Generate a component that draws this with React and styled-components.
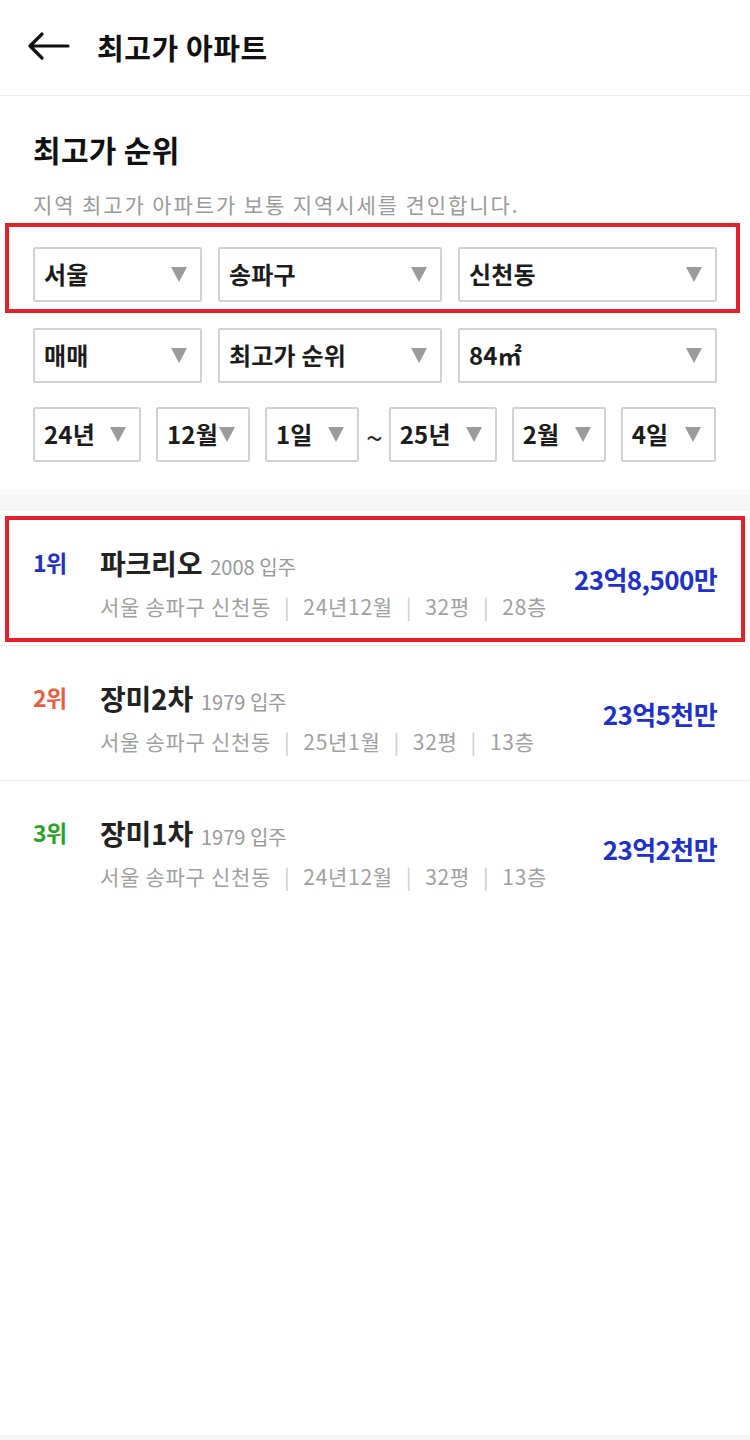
import React from "react";
import styled, { createGlobalStyle } from "styled-components";

const GlobalStyle = createGlobalStyle`
  html, body {
    margin: 0;
    padding: 0;
    background: #f6f6f6;
  }
  body {
    font-family: "Noto Sans CJK KR", "Noto Sans", sans-serif;
    color: #222;
  }
  * { box-sizing: border-box; }
`;

const regionRow = [
  { label: "서울", w: 169 },
  { label: "송파구", w: 224 },
  { label: "신천동", w: 259 },
];

const typeRow = [
  { label: "매매", w: 169 },
  { label: "최고가 순위", w: 224 },
  { label: "84㎡", w: 259 },
];

const startDate = [
  { label: "24년", w: 108 },
  { label: "12월", w: 94 },
  { label: "1일", w: 94 },
];

const endDate = [
  { label: "25년", w: 108 },
  { label: "2월", w: 94 },
  { label: "4일", w: 95 },
];

const ranking = [
  {
    rank: 1,
    color: "#2230c0",
    name: "파크리오",
    year: 2008,
    meta: ["서울 송파구 신천동", "24년12월", "32평", "28층"],
    price: "23억8,500만",
    marked: true,
  },
  {
    rank: 2,
    color: "#e5603f",
    name: "장미2차",
    year: 1979,
    meta: ["서울 송파구 신천동", "25년1월", "32평", "13층"],
    price: "23억5천만",
  },
  {
    rank: 3,
    color: "#2aa12a",
    name: "장미1차",
    year: 1979,
    meta: ["서울 송파구 신천동", "24년12월", "32평", "13층"],
    price: "23억2천만",
  },
];

function BackArrow() {
  return (
    <svg width="44" height="30" viewBox="0 0 44 30" fill="none">
      <path
        d="M42 15H4M16 3L4 15l12 12"
        stroke="#111"
        strokeWidth="3.2"
        strokeLinecap="round"
        strokeLinejoin="round"
      />
    </svg>
  );
}

function Select({ label, w }) {
  return (
    <SelectBox style={{ width: w }}>
      <SelectText>{label}</SelectText>
      <Caret />
    </SelectBox>
  );
}

function App() {
  return (
    <Page>
      <GlobalStyle />
      <Header>
        <BackButton>
          <BackArrow />
        </BackButton>
        <HeaderTitle>최고가 아파트</HeaderTitle>
      </Header>

      <Filters>
        <SectionTitle>최고가 순위</SectionTitle>
        <SectionDesc>지역 최고가 아파트가 보통 지역시세를 견인합니다.</SectionDesc>

        <SelectRow $top={28} $gap={16}>
          {regionRow.map((s) => (
            <Select key={s.label} {...s} />
          ))}
          <Highlight $t={-24} $r={-23} $b={-11} $l={-28} />
        </SelectRow>
        <SelectRow $top={26} $gap={16}>
          {typeRow.map((s) => (
            <Select key={s.label} {...s} />
          ))}
        </SelectRow>
        <SelectRow $top={24} $gap={15}>
          {startDate.map((s) => (
            <Select key={s.label} {...s} />
          ))}
          <Tilde>~</Tilde>
          {endDate.map((s) => (
            <Select key={s.label} {...s} />
          ))}
        </SelectRow>
      </Filters>

      <Band />

      <List>
        {ranking.map((item) => (
          <Item key={item.rank}>
            <Rank $color={item.color}>{item.rank}위</Rank>
            <Info>
              <NameLine>
                <Name>{item.name}</Name>
                <Year>{item.year} 입주</Year>
              </NameLine>
              <Meta>
                {item.meta.map((m, i) => (
                  <React.Fragment key={m}>
                    {i > 0 && <Sep>|</Sep>}
                    <span>{m}</span>
                  </React.Fragment>
                ))}
              </Meta>
            </Info>
            <Price>{item.price}</Price>
            {item.marked && <Highlight $t={5} $r={5} $b={3} $l={5} />}
          </Item>
        ))}
      </List>
    </Page>
  );
}

export default App;

const Page = styled.div`
  width: 750px;
  min-height: 1435px;
  background: #fff;
`;

const Header = styled.header`
  height: 96px;
  display: flex;
  align-items: center;
  padding: 0 0 0 26px;
  border-bottom: 1px solid #ececec;
`;

const BackButton = styled.div`
  display: flex;
  align-items: center;
  width: 71px;
  margin-top: -3px;
`;

const HeaderTitle = styled.h1`
  margin: 0;
  margin-top: -2px;
  font-size: 29px;
  font-weight: 700;
  letter-spacing: 0.6px;
  color: #111;
`;

const Filters = styled.section`
  padding: 30px 33px 27px;
`;

const SectionTitle = styled.h2`
  margin: 0;
  font-size: 30px;
  font-weight: 700;
  line-height: 46px;
  letter-spacing: 0.3px;
  color: #111;
`;

const SectionDesc = styled.p`
  margin: 0;
  margin-top: 17px;
  font-size: 21px;
  line-height: 30px;
  letter-spacing: 1.9px;
  color: #9a9a9a;
`;

const SelectRow = styled.div`
  position: relative;
  display: flex;
  align-items: center;
  gap: ${(p) => p.$gap}px;
  margin-top: ${(p) => p.$top}px;
`;

const SelectBox = styled.div`
  height: 55px;
  flex: none;
  display: flex;
  align-items: center;
  justify-content: space-between;
  padding: 0 13px 0 9px;
  border: 2px solid #d2d2d2;
  border-radius: 2px;
  background: #fff;
`;

const SelectText = styled.span`
  margin-top: -2px;
  font-size: 24px;
  font-weight: 700;
  letter-spacing: 0.2px;
  color: #1c1c1c;
  white-space: nowrap;
`;

const Caret = styled.span`
  width: 0;
  height: 0;
  flex: none;
  border-left: 8.5px solid transparent;
  border-right: 8.5px solid transparent;
  border-top: 15px solid #9b9b9b;
`;

const Tilde = styled.span`
  font-size: 30px;
  font-weight: 400;
  line-height: 1;
  color: #222;
  margin: 2px -9px 0 -8px;
`;

const Band = styled.div`
  height: 22px;
  background: linear-gradient(#fafafa, #f5f5f5);
`;

const List = styled.ul`
  margin: 0;
  padding: 0;
  list-style: none;
`;

const Item = styled.li`
  position: relative;
  height: 135px;
  display: flex;
  align-items: flex-start;
  padding: 0 33px;
  border-bottom: 1px solid #eeeeee;

  &:last-child {
    border-bottom: none;
  }
`;

const Rank = styled.div`
  width: 67px;
  flex: none;
  padding-top: 34px;
  font-size: 23px;
  font-weight: 700;
  line-height: 34px;
  letter-spacing: -0.5px;
  color: ${(p) => p.$color};
`;

const Info = styled.div`
  flex: 1;
  padding-top: 32px;
`;

const NameLine = styled.div`
  display: flex;
  align-items: baseline;
  gap: 8px;
  height: 40px;
`;

const Name = styled.span`
  font-size: 28px;
  font-weight: 700;
  line-height: 40px;
  letter-spacing: -0.2px;
  color: #222;
`;

const Year = styled.span`
  font-size: 20px;
  letter-spacing: 0;
  color: #999;
`;

const Meta = styled.div`
  margin-top: 8px;
  font-size: 21px;
  line-height: 30px;
  letter-spacing: 0.7px;
  color: #a0a0a0;
  white-space: nowrap;
`;

const Sep = styled.span`
  margin: 0 13px;
  color: #cccccc;
`;

const Price = styled.div`
  flex: none;
  padding-top: 50px;
  font-size: 26px;
  font-weight: 700;
  line-height: 36px;
  letter-spacing: -0.6px;
  color: #2030c8;
`;

const Highlight = styled.div`
  position: absolute;
  top: ${(p) => p.$t}px;
  right: ${(p) => p.$r}px;
  bottom: ${(p) => p.$b}px;
  left: ${(p) => p.$l}px;
  border: 4px solid #e3202b;
  pointer-events: none;
`;
